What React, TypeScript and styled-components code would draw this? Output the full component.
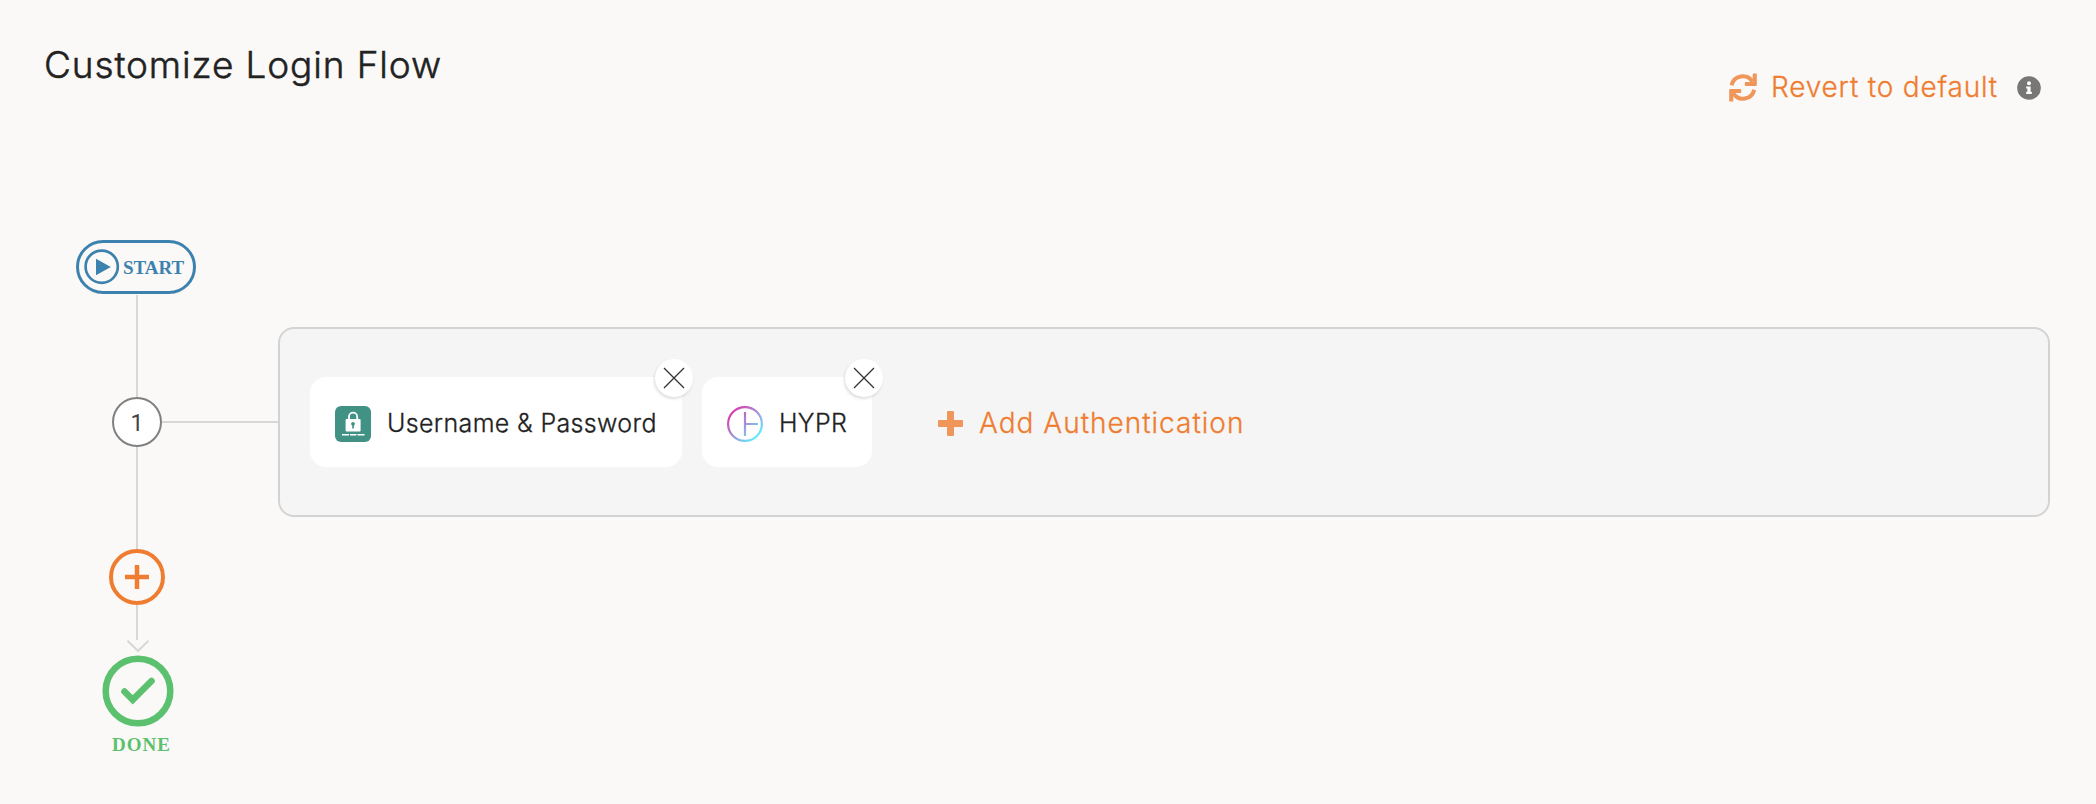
import React from "react";
import styled, { createGlobalStyle } from "styled-components";

const color = {
  page: "#faf9f7",
  text: "#222222",
  line: "#d7d7d6",
  panel: "#f5f5f5",
  orange: "#ef7d31",
  orangeSoft: "#f1965a",
  blue: "#3d82ae",
  green: "#5cc16e",
  teal: "#429185",
};

const GlobalStyle = createGlobalStyle`
  *, *::before, *::after { box-sizing: border-box; }
  body {
    margin: 0;
    background: ${color.page};
    color: ${color.text};
    font-family: Inter, "Liberation Sans", sans-serif;
    font-weight: 300;
  }
  svg { display: block; flex: none; }
  button {
    margin: 0;
    padding: 0;
    border: 0;
    background: none;
    color: inherit;
    font: inherit;
    cursor: pointer;
  }
`;

const Page = styled.main`
  min-height: 804px;
  padding: 40px 46px 0 76px;
`;

const Header = styled.header`
  display: flex;
  justify-content: space-between;
  align-items: flex-start;
  height: 200px;
  margin-left: -32px;
`;

const Title = styled.h1`
  margin: 0;
  font-size: 37px;
  font-weight: 300;
  line-height: 50px;
  letter-spacing: 0.87px;
  white-space: nowrap;
  -webkit-text-stroke: 0.5px currentColor;
`;

const HeaderActions = styled.div`
  display: flex;
  align-items: center;
  gap: 19px;
  height: 40px;
  margin: 28px 9px 0 0;
`;

const TextButton = styled.button<{ $gap: number; $tracking: number }>`
  display: flex;
  align-items: center;
  gap: ${(p) => p.$gap}px;
  color: ${color.orange};
  font-size: 28px;
  line-height: 38px;
  letter-spacing: ${(p) => p.$tracking}px;
  white-space: nowrap;
  -webkit-text-stroke: 0.3px currentColor;
`;

const RevertButton = styled(TextButton)`
  margin-bottom: 2px;
`;

const StartRow = styled.section`
  height: 87px;
`;

const StartPill = styled.div`
  display: flex;
  align-items: center;
  gap: 3px;
  width: 120px;
  height: 54px;
  padding-left: 5px;
  border: 3px solid ${color.blue};
  border-radius: 27px;
`;

const FlowLabel = styled.span<{ $color: string; $tracking: number }>`
  color: ${(p) => p.$color};
  font-family: "Liberation Serif", serif;
  font-size: 19px;
  font-weight: 700;
  line-height: 24px;
  letter-spacing: ${(p) => p.$tracking}px;
`;

const StartLabel = styled(FlowLabel)`
  padding-top: 2px;
`;

const DoneLabel = styled(FlowLabel)`
  padding-left: 7px;
`;

const VerticalLine = styled.div<{ $height: number }>`
  width: 2px;
  height: ${(p) => p.$height}px;
  background: ${color.line};
`;

const StartLine = styled(VerticalLine)`
  margin: 1px 0 0 60px;
`;

const StepRow = styled.section`
  display: flex;
  align-items: center;
  height: 190px;
`;

const StepRail = styled.div`
  display: flex;
  flex-direction: column;
  align-items: center;
  width: 50px;
  margin-left: 36px;
`;

const StepNumber = styled.div`
  display: flex;
  align-items: center;
  justify-content: center;
  width: 50px;
  height: 50px;
  padding-top: 3px;
  border: 2px solid #808080;
  border-radius: 50%;
  background: #fff;
  color: #444;
  font-family: Roboto, sans-serif;
  font-size: 23px;
  font-weight: 400;
  line-height: 30px;
`;

const Connector = styled.div`
  width: 116px;
  height: 2px;
  background: ${color.line};
`;

const Panel = styled.div`
  display: flex;
  flex: 1;
  align-items: center;
  height: 190px;
  padding-left: 30px;
  border: 2px solid #d3d3d3;
  border-radius: 16px;
  background: ${color.panel};
`;

const MethodCard = styled.div<{ $width: number }>`
  position: relative;
  display: flex;
  align-items: center;
  gap: 16px;
  width: ${(p) => p.$width}px;
  height: 90px;
  margin-right: 20px;
  padding: 4px 0 0 25px;
  border-radius: 16px;
  background: #fff;
`;

const MethodName = styled.span`
  margin-bottom: 2px;
  font-size: 25px;
  line-height: 34px;
  letter-spacing: 0.36px;
  white-space: nowrap;
  -webkit-text-stroke: 0.3px currentColor;
`;

const RemoveButton = styled.button`
  position: absolute;
  top: -18px;
  right: -11px;
  display: flex;
  align-items: center;
  justify-content: center;
  width: 38px;
  height: 38px;
  border-radius: 50%;
  background: #fff;
  box-shadow: -1px 2px 3px rgba(0, 0, 0, 0.13);
`;

const AddAuthentication = styled(TextButton)`
  margin: 2px 0 0 46px;
`;

const EndRail = styled.section`
  display: flex;
  flex-direction: column;
  align-items: center;
  width: 122px;
`;

const AddStepButton = styled.button`
  display: flex;
  align-items: center;
  justify-content: center;
  width: 56px;
  height: 56px;
  border: 4.5px solid ${color.orange};
  border-radius: 50%;
`;

const Done = styled.div`
  display: flex;
  flex-direction: column;
  align-items: center;
  gap: 6px;
  margin: -0.5px 0 0 2px;
`;

const SyncIcon = () => (
  <svg width="28" height="29" viewBox="0 0 28 29" fill="none">
    <path d="M2.6 12.2A11.4 11.4 0 0 1 23.4 8.6" stroke={color.orangeSoft} strokeWidth="4" />
    <path d="M25.2 16.8A11.4 11.4 0 0 1 4.4 20.4" stroke={color.orangeSoft} strokeWidth="4" />
    <path d="M24.6.4h2.6a.6.6 0 0 1 .6.6v11a1 1 0 0 1-1 1h-10a1 1 0 0 1-1-1V9.8a1 1 0 0 1 1-.9h6.9V1.3a.9.9 0 0 1 .9-.9z" fill={color.orangeSoft} />
    <path d="M3.2 28.6H.8a.6.6 0 0 1-.6-.6V17a1 1 0 0 1 1-1h10a1 1 0 0 1 1 1v2.2a1 1 0 0 1-1 .9H4.3v7.6a.9.9 0 0 1-1.1.9z" fill={color.orangeSoft} />
  </svg>
);

const InfoIcon = () => (
  <svg width="24" height="24" viewBox="0 0 24 24">
    <circle cx="12" cy="12" r="11.8" fill="#777775" />
    <circle cx="12" cy="7.3" r="2" fill="#fff" />
    <path d="M9.2 10.4h4.4v5.3h1.2v2.2H9.2v-2.2h1.2v-3.1H9.2z" fill="#fff" />
  </svg>
);

const PlayIcon = () => (
  <svg width="36" height="36" viewBox="0 0 36 36">
    <circle cx="17.7" cy="17.7" r="16.1" fill="none" stroke={color.blue} strokeWidth="2.7" />
    <path d="M12 9.7 26.8 18 12 26.3z" fill={color.blue} />
  </svg>
);

const LockIcon = () => (
  <svg width="36" height="36" viewBox="0 0 36 36">
    <rect width="36" height="36" rx="6" fill={color.teal} />
    <path d="M14 14v-3.3a4.1 4.1 0 0 1 8.2 0V14" fill="none" stroke="#fff" strokeWidth="1.8" />
    <rect x="10.6" y="13" width="15" height="12.5" rx="1" fill="#fff" />
    <circle cx="18" cy="17.8" r="1.9" fill={color.teal} />
    <path d="M17.2 18h1.7v4.5h-1.7z" fill={color.teal} />
    <path d="M7 28.7h7m1 0h6.5m1 0h7" stroke="#fff" strokeWidth="1.6" />
  </svg>
);

const HyprIcon = () => (
  <svg width="36" height="36" viewBox="0 0 36 36" fill="none">
    <defs>
      <linearGradient id="hypr" gradientUnits="userSpaceOnUse" x1="6" y1="6" x2="30" y2="30">
        <stop offset="0" stopColor="#d63fb3" />
        <stop offset="0.5" stopColor="#a391d6" />
        <stop offset="1" stopColor="#66eafa" />
      </linearGradient>
    </defs>
    <circle cx="18" cy="18" r="16.9" stroke="url(#hypr)" strokeWidth="2.2" />
    <path d="M18 6v24M18 18H31" stroke="url(#hypr)" strokeWidth="2.2" />
  </svg>
);

const CloseIcon = () => (
  <svg width="22" height="22" viewBox="0 0 22 22" stroke="#333" strokeWidth="1.3">
    <path d="M1 1l20 20M21 1L1 21" />
  </svg>
);

const PlusIcon = () => (
  <svg width="25" height="25" viewBox="0 0 25 25" fill={color.orangeSoft}>
    <path d="M10 0h5a1 1 0 0 1 1 1v8h8a1 1 0 0 1 1 1v5a1 1 0 0 1-1 1h-8v8a1 1 0 0 1-1 1h-5a1 1 0 0 1-1-1v-8H1a1 1 0 0 1-1-1v-5a1 1 0 0 1 1-1h8V1a1 1 0 0 1 1-1z" />
  </svg>
);

const ThinPlusIcon = () => (
  <svg width="24" height="24" viewBox="0 0 24 24" stroke={color.orange} strokeWidth="4.5">
    <path d="M12 0v24M0 12h24" />
  </svg>
);

const ArrowTip = () => (
  <svg width="24" height="15" viewBox="0 0 24 15" fill="none" stroke={color.line} strokeWidth="2">
    <path d="M2.5 0.7 13 11 23.5 0.7" />
  </svg>
);

const DoneIcon = () => (
  <svg width="72" height="72" viewBox="0 0 72 72" fill="none" stroke={color.green}>
    <circle cx="36" cy="36" r="32.3" strokeWidth="6.5" />
    <path d="M22.5 36.5 30.7 44.8 49.5 26" strokeWidth="6.6" strokeLinecap="round" />
  </svg>
);

interface Method {
  name: string;
  width: number;
  icon: React.ReactNode;
}

const methods: Method[] = [
  { name: "Username & Password", width: 372, icon: <LockIcon /> },
  { name: "HYPR", width: 170, icon: <HyprIcon /> },
];

export default function App() {
  return (
    <>
      <GlobalStyle />
      <Page>
        <Header>
          <Title>Customize Login Flow</Title>
          <HeaderActions>
            <RevertButton $gap={14} $tracking={0.81}>
              <SyncIcon />
              Revert to default
            </RevertButton>
            <InfoIcon />
          </HeaderActions>
        </Header>

        <StartRow>
          <StartPill>
            <PlayIcon />
            <StartLabel $color={color.blue} $tracking={0}>START</StartLabel>
          </StartPill>
          <StartLine $height={32} />
        </StartRow>

        <StepRow>
          <StepRail>
            <VerticalLine $height={70} />
            <StepNumber>1</StepNumber>
            <VerticalLine $height={70} />
          </StepRail>
          <Connector />
          <Panel>
            {methods.map((method) => (
              <MethodCard key={method.name} $width={method.width}>
                {method.icon}
                <MethodName>{method.name}</MethodName>
                <RemoveButton aria-label={`Remove ${method.name}`}>
                  <CloseIcon />
                </RemoveButton>
              </MethodCard>
            ))}
            <AddAuthentication $gap={16} $tracking={1}>
              <PlusIcon />
              Add Authentication
            </AddAuthentication>
          </Panel>
        </StepRow>

        <EndRail>
          <VerticalLine $height={32} />
          <AddStepButton aria-label="Add step">
            <ThinPlusIcon />
          </AddStepButton>
          <VerticalLine $height={35} />
          <ArrowTip />
          <Done>
            <DoneIcon />
            <DoneLabel $color={color.green} $tracking={1}>DONE</DoneLabel>
          </Done>
        </EndRail>
      </Page>
    </>
  );
}
